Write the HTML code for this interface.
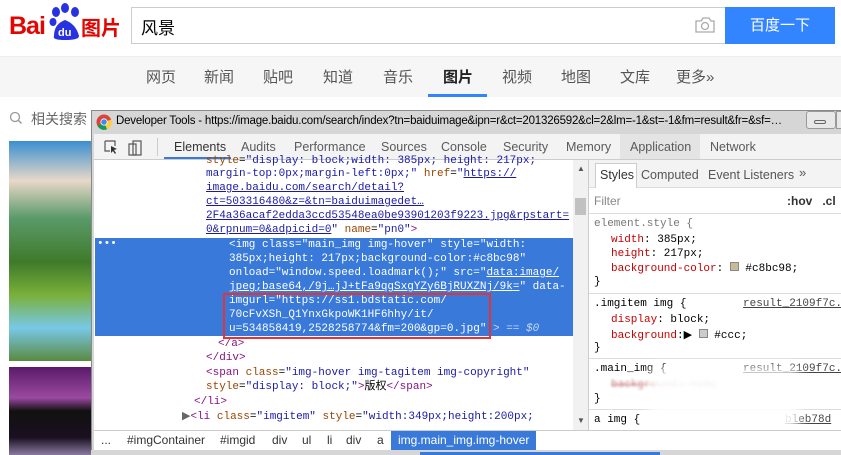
<!DOCTYPE html>
<html><head><meta charset="utf-8"><style>
*{margin:0;padding:0;box-sizing:border-box}
body{width:841px;height:455px;overflow:hidden;background:#fff;font-family:"Liberation Sans","Noto Sans CJK SC",sans-serif;position:relative}
.a{position:absolute;white-space:nowrap}
.nav span{position:absolute;top:66px;font-size:15px;color:#555}
.code{font-family:"Liberation Mono",monospace;font-size:11px;line-height:14.2px}
.code div{position:absolute;white-space:nowrap}
.tg{color:#881280}.at{color:#994500}.av{color:#1a1aa6}.ln{color:#1a1aa6;text-decoration:underline}.g{color:#a5a5a5}
.sel .tg,.sel .at,.sel .av,.sel .ln,.sel{color:#fff}
.r{font-family:"Liberation Mono",monospace;font-size:11px}
.p{color:#c80000}
</style></head><body>
<!-- logo -->
<div class="a" style="left:9px;top:12px;font:bold 25px 'Liberation Sans';color:#e10601;letter-spacing:-1px">Bai</div>
<div class="a" style="left:48px;top:3px;width:34px;height:38px">
<svg width="34" height="38"><ellipse cx="8" cy="9" rx="4" ry="5" fill="#2932e1"/><ellipse cx="17" cy="5" rx="4" ry="5" fill="#2932e1"/><ellipse cx="27" cy="9" rx="4" ry="5" fill="#2932e1"/><ellipse cx="5" cy="19" rx="3.5" ry="4" fill="#2932e1"/><path d="M6 33 Q6 21 17 17 Q28 21 31 33 Q31 37 17 37 Q4 37 6 33Z" fill="#2932e1"/><text x="10" y="33" font-size="11" font-weight="bold" fill="#fff" font-family="Liberation Sans">du</text></svg></div>
<div class="a" style="left:81px;top:12px;font:bold 20px 'Noto Sans CJK SC';color:#e10601">图片</div>
<!-- search -->
<div class="a" style="left:131px;top:7px;width:595px;height:37px;border:1px solid #ccc"></div>
<div class="a" style="left:141px;top:14px;font-size:17px;color:#000">风景</div>
<svg class="a" style="left:694px;top:16px" width="22" height="18"><path d="M2 5h5l2-3h6l2 3h3v11H2z" fill="none" stroke="#aaa" stroke-width="1.3"/><circle cx="11" cy="10" r="3.5" fill="none" stroke="#aaa" stroke-width="1.3"/></svg>
<div class="a" style="left:725px;top:7px;width:110px;height:37px;background:#3385ff;color:#fff;font-size:15px;text-align:center;line-height:37px">百度一下</div>
<!-- nav -->
<div class="a" style="left:0;top:56px;width:841px;height:41px;background:#f6f6f6;border-top:1px solid #eee"></div>
<div class="nav">
<span style="left:146px">网页</span><span style="left:204px">新闻</span><span style="left:263px">贴吧</span><span style="left:323px">知道</span><span style="left:383px">音乐</span><span style="left:443px;color:#222;font-weight:bold">图片</span><span style="left:502px">视频</span><span style="left:561px">地图</span><span style="left:620px">文库</span><span style="left:676px">更多»</span>
</div>
<div class="a" style="left:428px;top:94px;width:59px;height:3px;background:#3385ff"></div>
<svg class="a" style="left:9px;top:111px" width="14" height="14"><circle cx="6" cy="6" r="4.5" fill="none" stroke="#999" stroke-width="1.3"/><path d="M9.5 9.5l3 3" stroke="#999" stroke-width="1.5"/></svg>
<div class="a" style="left:31px;top:109px;font-size:14px;color:#666">相关搜索</div>
<div class="a" style="left:9px;top:141px;width:82px;height:220px;background:linear-gradient(180deg,#3a8fd0 0%,#e8d8c8 18%,#5a9a6a 35%,#3f7a2a 55%,#7ab03a 70%,#78c8e8 85%,#5a8a40 100%)"></div>
<div class="a" style="left:9px;top:367px;width:82px;height:88px;background:linear-gradient(180deg,#5a1a6a 0%,#9a4aa0 35%,#111 50%,#1a1020 80%,#8a7aa0 100%)"></div>
<!-- devtools -->
<div class="a" style="left:91px;top:110px;width:752px;height:345px;background:#d6d6d6;border:1px solid #8a8a8a"></div>
<svg class="a" style="left:96px;top:114px" width="16" height="16"><circle cx="8" cy="8" r="7.5" fill="#db4437"/><path d="M8 8 L1.5 12 A7.5 7.5 0 0 0 11 15.3Z" fill="#0f9d58"/><path d="M8 8 L11 15.3 A7.5 7.5 0 0 0 15.3 5.5Z" fill="#ffcd40"/><circle cx="8" cy="8" r="3.6" fill="#fff"/><circle cx="8" cy="8" r="2.8" fill="#4285f4"/></svg>
<div class="a" style="left:116px;top:115px;width:684px;overflow:hidden;font-size:11.5px;letter-spacing:-0.2px;color:#000">Developer Tools - https://image.baidu.com/search/index?tn=baiduimage&amp;ipn=r&amp;ct=201326592&amp;cl=2&amp;lm=-1&amp;st=-1&amp;fm=result&amp;fr=&amp;sf=…</div>
<div class="a" style="left:806px;top:111px;width:30px;height:18px;border:1px solid #999;border-radius:3px;background:#e8e8e8"></div>
<div class="a" style="left:814px;top:120px;width:12px;height:4px;border:1px solid #666;border-radius:2px"></div>
<div class="a" style="left:836px;top:111px;width:10px;height:18px;border:1px solid #999;background:#e8e8e8"></div>
<div class="a" style="left:94px;top:134px;width:747px;height:26px;background:#f3f3f3;border-bottom:1px solid #ccc"></div>
<svg class="a" style="left:104px;top:140px" width="40" height="16"><path d="M1 1h10v5M1 1v10h5" fill="none" stroke="#555" stroke-width="1.2"/><path d="M7 6l6 3-3 1 2 3-1 1-2-3-2 2z" fill="#333"/><rect x="25" y="4" width="7" height="11" fill="none" stroke="#555" stroke-width="1.2"/><rect x="29" y="1" width="8" height="14" fill="none" stroke="#555" stroke-width="1.2"/></svg>
<div class="a" style="left:157px;top:138px;width:1px;height:18px;background:#ccc"></div>
<div class="a" style="left:164px;top:157px;width:67px;height:2px;background:#3879d9"></div>
<div class="a" style="left:620px;top:134px;width:80px;height:25px;background:#e4e4e4"></div>
<div class="a" style="top:140px;font-size:12.5px;color:#5a5a5a;word-spacing:0">
<span class="a" style="left:174px;color:#333">Elements</span><span class="a" style="left:241px">Audits</span><span class="a" style="left:294px">Performance</span><span class="a" style="left:381px">Sources</span><span class="a" style="left:441px">Console</span><span class="a" style="left:503px">Security</span><span class="a" style="left:566px">Memory</span><span class="a" style="left:630px">Application</span><span class="a" style="left:710px">Network</span></div>
<!-- elements pane -->
<div class="a" style="left:94px;top:160px;width:494px;height:270px;background:#fff;overflow:hidden">
<div class="a" style="left:1px;top:78px;width:478px;height:98px;background:#3879d9"></div>
<div class="a" style="left:479px;top:0;width:15px;height:270px;background:#f1f1f1"></div>
<div class="a" style="left:481px;top:38px;width:11px;height:17px;background:#c1c1c1"></div>
<div class="a" style="left:483px;top:4px;font-size:8px;color:#555">▲</div>
<div class="a" style="left:483px;top:256px;font-size:8px;color:#555">▼</div>
</div>
<div class="code">
<div style="left:206px;top:154px"><span class="at">style</span>=<span class="av">"display: block;width: 385px; height: 217px;</span></div>
<div style="left:206px;top:167px"><span class="av">margin-top:0px;margin-left:0px;"</span> <span class="at">href</span>=<span class="av">"</span><span class="ln">https://</span></div>
<div style="left:206px;top:181px"><span class="ln">image.baidu.com/search/detail?</span></div>
<div style="left:206px;top:195px"><span class="ln">ct=503316480&amp;z=&amp;tn=baiduimagedet…</span></div>
<div style="left:206px;top:209px"><span class="ln">2F4a36acaf2edda3ccd53548ea0be93901203f9223.jpg&amp;rpstart=</span></div>
<div style="left:206px;top:223px"><span class="ln">0&amp;rpnum=0&amp;adpicid=0</span><span class="av">"</span> <span class="at">name</span>=<span class="av">"pn0"</span><span class="tg">&gt;</span></div>
<div class="sel" style="left:97px;top:237px">•••</div>
<div class="sel" style="left:229px;top:238px">&lt;img class="main_img img-hover" style="width:</div>
<div class="sel" style="left:229px;top:252px">385px;height: 217px;background-color:#c8bc98"</div>
<div class="sel" style="left:229px;top:266px">onload="window.speed.loadmark();" src="<u>data:image/</u></div>
<div class="sel" style="left:229px;top:280px"><u>jpeg;base64,/9j…jJ+tFa9qgSxgYZy6BjRUXZNj/9k=</u>" data-</div>
<div class="sel" style="left:229px;top:294px">imgurl="https://ss1.bdstatic.com/</div>
<div class="sel" style="left:229px;top:308px">70cFvXSh_Q1YnxGkpoWK1HF6hhy/it/</div>
<div class="sel" style="left:229px;top:322px">u=534858419,2528258774&amp;fm=200&amp;gp=0.jpg" <i style="color:#c8d8f4">&gt; == $0</i></div>
<div style="left:218px;top:337px"><span class="tg">&lt;/a&gt;</span></div>
<div style="left:206px;top:351px"><span class="tg">&lt;/div&gt;</span></div>
<div style="left:206px;top:366px"><span class="tg">&lt;span </span><span class="at">class</span>=<span class="av">"img-hover img-tagitem img-copyright"</span></div>
<div style="left:206px;top:380px"><span class="at">style</span>=<span class="av">"display: block;"</span><span class="tg">&gt;</span>版权<span class="tg">&lt;/span&gt;</span></div>
<div style="left:194px;top:395px"><span class="tg">&lt;/li&gt;</span></div>
<div style="left:182px;top:410px"><span style="color:#666">▶</span><span class="tg">&lt;li </span><span class="at">class</span>=<span class="av">"imgitem"</span> <span class="at">style</span>=<span class="av">"width:349px;height:200px;</span></div>
</div>
<div class="a" style="left:223px;top:293px;width:268px;height:46px;border:2px solid #e53333"></div>
<!-- breadcrumb -->
<div class="a" style="left:94px;top:430px;width:747px;height:20px;background:#fff;border-top:1px solid #ccc;font-size:12px;color:#333">
<span class="a" style="left:7px;top:2px">...</span><span class="a" style="left:33px;top:2px">#imgContainer</span><span class="a" style="left:126px;top:2px">#imgid</span><span class="a" style="left:178px;top:2px">div</span><span class="a" style="left:208px;top:2px">ul</span><span class="a" style="left:233px;top:2px">li</span><span class="a" style="left:252px;top:2px">div</span><span class="a" style="left:283px;top:2px">a</span>
<span class="a" style="left:297px;top:0;height:19px;padding:2px 7px;background:#3879d9;color:#fff">img.main_img.img-hover</span></div>
<!-- styles pane -->
<div class="a" style="left:588px;top:160px;width:253px;height:270px;background:#fff;border-left:1px solid #ccc;overflow:hidden">
<div class="a" style="left:0;top:0;width:253px;height:28px;background:#f3f3f3;border-bottom:1px solid #ddd"></div>
<div class="a" style="left:6px;top:3px;width:42px;height:25px;background:#fff;border:1px solid #ccc;border-bottom:none"></div>
<div class="a" style="left:11px;top:8px;font-size:12.5px;color:#333">Styles</div>
<div class="a" style="left:52px;top:8px;font-size:12.5px;color:#555">Computed</div>
<div class="a" style="left:119px;top:8px;font-size:12.5px;color:#555">Event Listeners</div>
<div class="a" style="left:210px;top:5px;font-size:13px;color:#555">»</div>
<div class="a" style="left:5px;top:34px;font-size:12px;color:#888">Filter</div>
<div class="a" style="left:198px;top:34px;font-size:12px;color:#333;font-weight:bold">:hov&nbsp;&nbsp; .cl</div>
<div class="a" style="left:0;top:53px;width:253px;height:1px;background:#ddd"></div>
<div class="r">
<div class="a" style="left:5px;top:58px;color:#777">element.style {</div>
<div class="a" style="left:22px;top:74px"><span class="p">width</span>: 385px;</div>
<div class="a" style="left:22px;top:88px"><span class="p">height</span>: 217px;</div>
<div class="a" style="left:22px;top:102px"><span class="p">background-color</span>: <span style="display:inline-block;width:9px;height:9px;background:#c8bc98;border:1px solid #888"></span> #c8bc98;</div>
<div class="a" style="left:5px;top:116px">}</div>
<div class="a" style="left:0;top:133px;width:253px;height:1px;background:#ddd"></div>
<div class="a" style="left:5px;top:138px">.imgitem img {</div>
<div class="a" style="left:154px;top:138px;text-decoration:underline;color:#444">result_2109f7c.</div>
<div class="a" style="left:22px;top:154px"><span class="p">display</span>: block;</div>
<div class="a" style="left:22px;top:168px"><span class="p">background</span>:▶ <span style="display:inline-block;width:9px;height:9px;background:#ccc;border:1px solid #888"></span> #ccc;</div>
<div class="a" style="left:5px;top:182px">}</div>
<div class="a" style="left:0;top:198px;width:253px;height:1px;background:#ddd"></div>
<div class="a" style="left:5px;top:203px">.main_img {</div>
<div class="a" style="left:154px;top:203px;text-decoration:underline;color:#444">result_2109f7c.</div>
<div class="a" style="left:22px;top:219px;color:#c88;text-decoration:line-through;filter:blur(1px)">background: #c8c</div>
<div class="a" style="left:5px;top:233px">}</div>
<div class="a" style="left:0;top:249px;width:253px;height:1px;background:#ddd"></div>
<div class="a" style="left:5px;top:254px">a img {</div>
<div class="a" style="left:196px;top:254px;text-decoration:underline;color:#444">bleb78d</div>
<div class="a" style="left:22px;top:270px"><span class="p">border</span>:▶ 0;</div>
</div>
<div class="a" style="left:60px;top:208px;width:150px;height:65px;background:#fff;filter:blur(6px);opacity:.9"></div>
</div>
<div class="a" style="left:91px;top:450px;width:750px;height:5px;background:#d6d6d6"></div>
<div class="a" style="left:420px;top:452px;width:240px;height:3px;background:#3879d9"></div>
</body></html>
